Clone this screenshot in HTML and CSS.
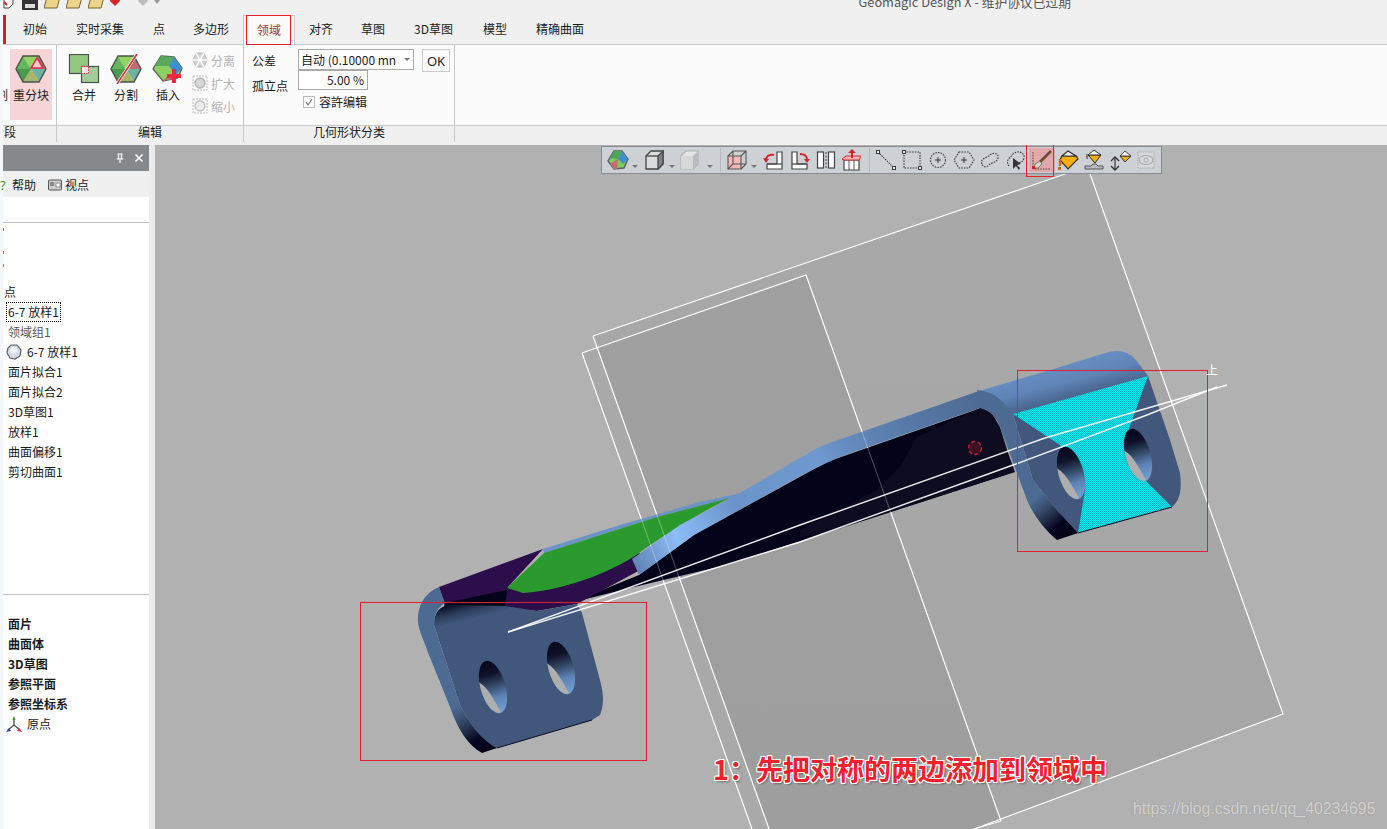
FILE: index.html
```html
<!DOCTYPE html>
<html lang="zh">
<head>
<meta charset="utf-8">
<title>Geomagic Design X</title>
<link rel="stylesheet" href="styles.css">
</head>
<body>
<svg class="defs" width="0" height="0">
  <defs>
    <symbol id="hex" viewBox="0 0 32 28">
      <polygon points="16,14 8,1 1,14" fill="#63b75f"/>
      <polygon points="16,14 8,1 24,1" fill="#93d35f"/>
      <polygon points="16,14 24,1 31,14" fill="#c46b6b"/>
      <polygon points="16,14 31,14 24,27" fill="#6bb3a0"/>
      <polygon points="16,14 24,27 8,27" fill="#a8b66c"/>
      <polygon points="16,14 8,27 1,14" fill="#479a4e"/>
      <polygon points="8,1 24,1 31,14 24,27 8,27 1,14" fill="none" stroke="#47534a" stroke-width="1.4"/>
    </symbol>
    <linearGradient id="gBand" gradientUnits="userSpaceOnUse" x1="632" y1="560" x2="980" y2="400">
      <stop offset="0" stop-color="#5f83b5"/><stop offset=".13" stop-color="#8cbdf8"/><stop offset=".3" stop-color="#6b94ca"/><stop offset=".55" stop-color="#6f98cf"/><stop offset=".72" stop-color="#5c80b0"/><stop offset="1" stop-color="#4d6a93"/>
    </linearGradient>
    <linearGradient id="gTop" gradientUnits="userSpaceOnUse" x1="1070" y1="358" x2="1080" y2="396">
      <stop offset="0" stop-color="#6a90c3"/><stop offset=".55" stop-color="#5f85b8"/><stop offset="1" stop-color="#47648c"/>
    </linearGradient>
    <linearGradient id="gFaceL" gradientUnits="userSpaceOnUse" x1="452" y1="603" x2="457" y2="623">
      <stop offset="0" stop-color="#03031a"/><stop offset=".5" stop-color="#2a3a58"/><stop offset="1" stop-color="#41587c"/>
    </linearGradient>
    <linearGradient id="gRimL" gradientUnits="userSpaceOnUse" x1="453" y1="708" x2="480" y2="750">
      <stop offset="0" stop-color="#4d6a93"/><stop offset=".35" stop-color="#334766"/><stop offset=".8" stop-color="#050520"/><stop offset="1" stop-color="#03031a"/>
    </linearGradient>
    <linearGradient id="gRimR" gradientUnits="userSpaceOnUse" x1="1030" y1="503" x2="1058" y2="537">
      <stop offset="0" stop-color="#4d6a93"/><stop offset=".35" stop-color="#334766"/><stop offset=".8" stop-color="#050520"/><stop offset="1" stop-color="#03031a"/>
    </linearGradient>
    <linearGradient id="gHole" x1="0" y1="0" x2="0" y2="1">
      <stop offset="0" stop-color="#06061c"/><stop offset=".25" stop-color="#10122a"/><stop offset=".5" stop-color="#38506f"/><stop offset=".7" stop-color="#5d82b4"/><stop offset="1" stop-color="#74a0d6"/>
    </linearGradient>
    <linearGradient id="gPlane" x1="0" y1="0" x2="0" y2="1">
      <stop offset="0" stop-color="#a8a8a8"/><stop offset="1" stop-color="#a6a6a6"/>
    </linearGradient>
    <pattern id="dither" width="2" height="2" patternUnits="userSpaceOnUse">
      <rect width="2" height="2" fill="#0fb4c4"/>
      <rect width="1" height="1" fill="#00f0f0"/>
      <rect x="1" y="1" width="1" height="1" fill="#00e4e8"/>
    </pattern>
    <g id="hole">
      <ellipse rx="12.5" ry="27" fill="url(#gHole)"/>
      <path d="M-12,-8 A12.5,27 0 0 0 1,26.5 C-3,14 -4,0 -12,-8Z" fill="#aeaeae"/>
    </g>
  </defs>
</svg>
<div class="app">
  <div class="titlebar">
    <svg class="qa-icon qa-doc" viewBox="0 0 14 14"><path d="M1,-6H10V4L6,8H1Z" fill="#fff" stroke="#444"/><path d="M1,2L4,5" stroke="#d22" stroke-width="2"/></svg>
    <svg class="qa-icon qa-save" viewBox="0 0 16 14"><path d="M0,-6H16V10H0Z" fill="#333"/><rect x="3" y="4" width="10" height="4" fill="#ddd"/></svg>
    <svg class="qa-icon qa-folder" viewBox="0 0 16 14"><path d="M3,-3H16L13,8H0Z" fill="#ecd48a" stroke="#77622a"/></svg>
    <svg class="qa-icon qa-folder" viewBox="0 0 16 14"><path d="M3,-3H16L13,8H0Z" fill="#ecd48a" stroke="#77622a"/></svg>
    <svg class="qa-icon qa-folder" viewBox="0 0 16 14"><path d="M3,-3H16L13,8H0Z" fill="#ecd48a" stroke="#77622a"/></svg>
    <svg class="qa-icon qa-gem" viewBox="0 0 12 14"><path d="M2,-2H10L11,1L6,6L1,1Z" fill="#d8232a"/></svg>
    <svg class="qa-icon qa-gem2" viewBox="0 0 12 14"><path d="M2,-2H10L11,1L6,6L1,1Z" fill="#bdbdbd"/></svg>
    <svg class="qa-icon qa-caret" viewBox="0 0 8 14"><path d="M1,0H7L4,4Z" fill="#999"/></svg>
    <span class="title-text">Geomagic Design X - 维护协议已过期</span>
  </div>
  <nav class="tabs">
    <i class="tab-mark"></i>
    <span class="tab">初始</span>
    <span class="tab tab-gap">实时采集</span>
    <span class="tab tab-gap">点</span>
    <span class="tab">多边形</span>
    <span class="tab tab-active"><span class="tab-label-red">领域</span></span>
    <span class="tab">对齐</span>
    <span class="tab">草图</span>
    <span class="tab tab-gap">3D草图</span>
    <span class="tab tab-gap-2">模型</span>
    <span class="tab tab-gap">精确曲面</span>
  </nav>
  <section class="ribbon">
    <div class="group group-seg">
      <div class="group-body body-end">
        <span class="clipped-label">分割</span>
        <div class="rb-btn rb-selected">
          <svg class="rb-icon" viewBox="0 0 32 30">
            <use href="#hex" x="0" y="1" width="32" height="28"/>
            <polygon points="22,4 28,14 16,14" fill="#f6c9cf" stroke="#d8324a" stroke-width="1.5"/>
          </svg>
          <span>重分块</span>
        </div>
      </div>
      <div class="group-label label-end"><span>分段</span></div>
    </div>
    <div class="group group-edit">
      <div class="group-body">
        <div class="rb-btn">
          <svg class="rb-icon" viewBox="0 0 32 30">
            <rect x="1.5" y="0.5" width="19" height="19" fill="#95c87f" stroke="#47524a" stroke-width="1.2"/>
            <rect x="13.5" y="12.5" width="17" height="16" fill="#a3cc9a" stroke="#47524a" stroke-width="1.2"/>
            <rect x="13.5" y="12.5" width="7" height="7" fill="#fbe3e3" stroke="#d8324a" stroke-dasharray="1.5 1"/>
          </svg>
          <span>合并</span>
        </div>
        <div class="rb-btn">
          <svg class="rb-icon" viewBox="0 0 32 30">
            <use href="#hex" x="0" y="1" width="32" height="28"/>
            <path d="M27,0L7,30" stroke="#fff" stroke-width="3"/>
            <path d="M27,0L7,30" stroke="#e02a3a" stroke-width="1.6"/>
          </svg>
          <span>分割</span>
        </div>
        <div class="rb-btn">
          <svg class="rb-icon" viewBox="0 0 32 30">
            <polygon points="9,2 22,3 30,14 26,24 11,27 1,15" fill="#8ccf62" stroke="#57625a" stroke-width="1.3"/>
            <polygon points="9,2 22,3 17,12 3,12" fill="#5aa95a"/>
            <polygon points="22,3 30,14 24,21 17,12" fill="#3d8fce"/>
            <polygon points="11,27 26,24 17,20" fill="#c46b6b"/>
            <path d="M22,15V29M15,22H29" stroke="#ea2a3c" stroke-width="4"/>
          </svg>
          <span>插入</span>
        </div>
        <div class="mini-col">
          <div class="mini-btn">
            <svg class="mini-icon" viewBox="0 0 16 16"><polygon points="4,1 12,1 15,8 12,15 4,15 1,8" fill="#cfcfcf" stroke="#bdbdbd"/><path d="M1,8H15M4,1L12,15M12,1L4,15" stroke="#fbfbfb" stroke-width="1.6"/></svg>
            <span>分离</span>
          </div>
          <div class="mini-btn">
            <svg class="mini-icon" viewBox="0 0 16 16"><rect x="1" y="1" width="14" height="14" fill="none" stroke="#bbb" stroke-dasharray="2 1"/><circle cx="8" cy="8" r="5" fill="#d6d6d6" stroke="#b5b5b5" stroke-width="1.4"/></svg>
            <span>扩大</span>
          </div>
          <div class="mini-btn">
            <svg class="mini-icon" viewBox="0 0 16 16"><rect x="1" y="1" width="14" height="14" fill="none" stroke="#bbb" stroke-dasharray="2 1"/><circle cx="8" cy="8" r="5" fill="#ececec" stroke="#c0c0c0" stroke-width="1.4"/></svg>
            <span>缩小</span>
          </div>
        </div>
      </div>
      <div class="group-label"><span>编辑</span></div>
    </div>
    <div class="group group-geo">
      <div class="group-body geo-form">
        <span class="geo-name">公差</span>
        <div class="geo-combo"><span>自动 (0.10000 mn</span><i class="combo-caret"></i></div>
        <button class="geo-ok" type="button">OK</button>
        <span class="geo-name geo-name-low">孤立点</span>
        <div class="geo-input">5.00 %</div>
        <span></span>
        <span></span>
        <label class="geo-check"><svg class="check-box" viewBox="0 0 12 12"><rect x=".5" y=".5" width="11" height="11" fill="#fff" stroke="#bbb"/><path d="M3,6L5,9L9,3" fill="none" stroke="#777" stroke-width="1.2"/></svg><span>容許编辑</span></label>
      </div>
      <div class="group-label"><span>几何形状分类</span></div>
    </div>
    <div class="group group-rest">
      <div class="group-body"></div>
      <div class="group-label"></div>
    </div>
  </section>
  <div class="band"></div>
  <main class="main">
    <aside class="panel">
      <header class="panel-head">
        <svg class="head-icon" viewBox="0 0 10 10"><path d="M2.5,1H7.5M3.5,1V6H6.5V1M1.5,6H8.5M5,6V10" fill="none" stroke="#fff" stroke-width="1.2"/></svg>
        <svg class="head-icon" viewBox="0 0 10 10"><path d="M1.5,1.5L8.5,8.5M8.5,1.5L1.5,8.5" stroke="#fff" stroke-width="1.6"/></svg>
      </header>
      <div class="panel-tools">
        <span class="help-mark">?</span><span class="tool-text">帮助</span>
        <svg class="view-icon" viewBox="0 0 14 12"><rect x=".5" y="1" width="13" height="10" rx="1" fill="#cfcfcf" stroke="#555"/><rect x="2" y="3" width="4" height="4" fill="#888"/><rect x="8" y="4" width="4" height="4" fill="#fff" stroke="#555" stroke-width=".6"/></svg>
        <span class="tool-text">视点</span>
      </div>
      <div class="panel-search"></div>
      <div class="panel-list">
        <div class="ticks"><i></i><i class="tick-b"></i><i class="tick-c"></i></div>
        <div class="row row-cut">点</div>
        <div class="row"><span class="focus">6-7 放样1</span></div>
        <div class="row row-muted">领域组1</div>
        <div class="row row-icon">
          <svg class="row-svg" viewBox="0 0 16 16"><polygon points="5,1 11,1 15,6 14,12 9,15 4,14 1,9 2,4" fill="#d3dbe2" stroke="#596068" stroke-width="1.2"/><polygon points="5,3 10,3 12,7 8,10 4,8" fill="#eef2f5"/></svg>
          <span>6-7 放样1</span>
        </div>
        <div class="row">面片拟合1</div>
        <div class="row">面片拟合2</div>
        <div class="row">3D草图1</div>
        <div class="row">放样1</div>
        <div class="row">曲面偏移1</div>
        <div class="row">剪切曲面1</div>
      </div>
      <div class="panel-list2">
        <div class="row row-bold">面片</div>
        <div class="row row-bold">曲面体</div>
        <div class="row row-bold">3D草图</div>
        <div class="row row-bold">参照平面</div>
        <div class="row row-bold">参照坐标系</div>
        <div class="row row-icon">
          <svg class="row-svg" viewBox="0 0 16 16"><path d="M8,9V2" stroke="#555" stroke-width="1.4"/><path d="M8,9L2,14M8,9L14,14" stroke="#555" stroke-width="1.4"/><path d="M6.5,4L8,0L9.5,4Z" fill="#3c9a1e"/><path d="M0,16L3,12L5,15Z" fill="#2a4fb0"/><path d="M16,16L13,12L11,15Z" fill="#d8324a"/></svg>
          <span>原点</span>
        </div>
      </div>
    </aside>
    <div class="gutter"></div>
    <div class="viewport">
      <svg class="scene" viewBox="155 145 1232 684" width="1232" height="684">
        <!-- datum planes -->
        <polygon points="593,336 1068,173 1090,174 1283,714 974,829 769,829" fill="url(#gPlane)"/>
        <polygon points="582,353 806,275 1001,821 974,829 752,829" fill="#000" opacity=".045"/>
        <g class="plane-lines">
          <polyline points="593,336 1068,173"/>
          <polyline points="593,336 769,829"/>
          <polyline points="1090,174 1283,714 974,829"/>
          <polyline points="582,353 806,275 1001,821 974,829"/>
          <polyline points="582,353 752,829"/>
        </g>
        <!-- part: left top -->
        <polygon points="543,549 620,525 700,502 750,491 735,497 657,517 544,553" fill="#6c93c7"/>
        <polygon points="570,603 639,575 694,535 827,462 981,408 995,418 1015,472 891,512 726,565 630,588" fill="#03031a"/>
        <polygon points="917,437 980,408 990,410 1000,427 1014,472 893,511 800,538 800,530 877,490 900,467" fill="#0d0c20"/>
        <path d="M505,588 L640,553 L642,569 L577,604 L537,611 L505,608Z" fill="#2c0f4a"/>
        <path d="M507,588 L544,553 L657,517 L730,498 C700,512 665,535 643,550 C620,568 570,590 523,593Z" fill="#2a9a2e"/>
        <polygon points="439,587 543,549 507,588 505,592 445,606" fill="#2c0f4a"/>
        <polygon points="445,603 507,590 505,606 444,608" fill="#03031a"/>
        <path d="M632,559 L680,525 L735,496 L810,452 Q822,445 841,439 L979,391 L980,408 L850,453 Q827,462 800,476 L694,535 L639,575Z" fill="url(#gBand)"/>
        <!-- left tab -->
        <path d="M434,625 C434,612 440,606 450,605 L505,606 L537,611 L577,604 L582,613 L600,680 C604,695 604,705 600,715 L592,720 L497,748 C482,740 470,725 460,705Z" fill="url(#gFaceL)"/>
        <path d="M439,587 C425,593 417,605 418,622 C419,632 424,640 427,650 L450,707 C458,730 468,745 482,753 L497,748 C482,740 470,725 460,705 L434,625 C434,612 440,606 445,603Z" fill="url(#gRimL)"/>
        <path d="M497,748 L592,720" stroke="#0a0a20" fill="none"/>
        <use href="#hole" transform="translate(493,687) rotate(-16)"/>
        <use href="#hole" transform="translate(561,668) rotate(-16)"/>
        <!-- right tab -->
        <path d="M979,391 L1057,368 L1105,353 Q1125,347 1136,360 L1148,376 L1013,414 L1000,400Z" fill="url(#gTop)"/>
        <path d="M1013,414 L1148,376 L1170,440 L1180,473 C1182,490 1180,500 1172,507 L1078,533 L1057,510 L1033,480Z" fill="#41587c"/>
        <path d="M977,390 Q992,391 1003,402 L1013,414 L1033,480 L1057,510 L1078,533 L1057,540 C1045,530 1033,515 1027,500 L1017,473 L1000,427 Q995,412 980,408Z" fill="url(#gRimR)"/>
        <polygon points="1013,414 1148,376 1126,437 1147,482 1172,507 1078,533 1085,490 1060,445" fill="url(#dither)"/>
        <path d="M1078,533 L1172,507" stroke="#0a0a20" fill="none"/>
        <use href="#hole" transform="translate(1071,473) rotate(-16)"/>
        <use href="#hole" transform="translate(1138,455) rotate(-16)"/>
        <circle cx="975" cy="448" r="6.5" fill="#3a1224" stroke="#c4203c" stroke-width="1.3" stroke-dasharray="4 2.5"/>
        <!-- lines on top -->
        <g class="plane-lines plane-faint">
          <polyline points="593,336 769,829"/>
          <polyline points="582,353 752,829"/>
          <polyline points="806,275 1001,821"/>
          <polyline points="1090,174 1283,714"/>
        </g>
        <g class="long-lines">
          <polyline points="508,632 800,525 1045,438 1227,385"/>
          <polyline points="508,632 800,542 1013,465 1147,415 1217,387"/>
        </g>
        <!-- annotation boxes -->
        <g class="marks">
          <rect x="360.5" y="602.5" width="286" height="158"/>
          <rect x="1017.5" y="370.5" width="190" height="181"/>
        </g>
      </svg>
      <span class="axis-label">上</span>
      <div class="vtoolbar">
        <span class="tb-btn"><svg viewBox="0 0 22 22"><polygon points="7,2 15,2 21,10 17,19 7,20 1,12" fill="#7ccb5e" stroke="#5c6066" stroke-width="1.4"/><polygon points="7,2 15,2 11,10 3,9" fill="#4ea655"/><polygon points="15,2 21,10 16,15 11,10" fill="#3d8fce"/><polygon points="3,15 11,10 10,20 7,20" fill="#c46b6b"/></svg></span>
        <i class="tb-arrow"></i>
        <span class="tb-btn"><svg viewBox="0 0 22 22"><path d="M2,7L7,2H19V15L14,20H2Z" fill="#d9dbde" stroke="#444" stroke-width="1.3"/><path d="M14,20V7L19,2V15Z" fill="#7d8288" stroke="#444" stroke-width="1.3"/><path d="M2,7H14" stroke="#444" stroke-width="1.3"/></svg></span>
        <i class="tb-arrow tb-arrow-n"></i>
        <span class="tb-btn"><svg viewBox="0 0 22 22"><path d="M2,7L7,2H19V15L14,20H2Z" fill="#e6e6e6" stroke="#aeb0b2" stroke-width="1.2"/><path d="M14,20V7L19,2V15Z" fill="#b9bbbd"/><path d="M2,7H14V20H2Z" fill="#d8d8d8"/></svg></span>
        <i class="tb-arrow tb-arrow-w"></i>
        <i class="tb-sep"></i>
        <span class="tb-btn"><svg viewBox="0 0 22 22"><path d="M2,7H15V20H2Z" fill="#f3b8b8" stroke="#555" stroke-width="1.1"/><path d="M2,7L7,2H20V15L15,20M15,7L20,2M7,2V15H20M2,20L7,15" fill="none" stroke="#555" stroke-width="1.1"/></svg></span>
        <i class="tb-arrow"></i>
        <span class="tb-btn"><svg viewBox="0 0 22 22"><path d="M14,3H19V20H4V15H14Z" fill="#fff" stroke="#444" stroke-width="1.2"/><path d="M4,15H19" stroke="#444" stroke-width="1.2"/><path d="M3,11C3,7 7,5 11,6" fill="none" stroke="#d8232a" stroke-width="1.8"/><path d="M0,9L3,14L6,10Z" fill="#d8232a"/></svg></span>
        <span class="tb-btn"><svg viewBox="0 0 22 22"><path d="M3,3H8V15H18V20H3Z" fill="#fff" stroke="#444" stroke-width="1.2"/><path d="M3,15H18" stroke="#444" stroke-width="1.2"/><path d="M11,5C15,5 18,7 18,11" fill="none" stroke="#d8232a" stroke-width="1.8"/><path d="M15,10L18,14L21,10Z" fill="#d8232a"/></svg></span>
        <span class="tb-btn"><svg viewBox="0 0 22 22"><rect x="2.5" y="3" width="6" height="16" fill="#fff" stroke="#444" stroke-width="1.2"/><rect x="13.5" y="3" width="6" height="16" fill="#fff" stroke="#444" stroke-width="1.2"/><path d="M11,3V19" stroke="#444" stroke-dasharray="2 1.5"/></svg></span>
        <span class="tb-btn"><svg viewBox="0 0 22 22"><path d="M3,11H18V21H3Z" fill="#fff" stroke="#444" stroke-width="1.2"/><path d="M8,11V21M13,11V21" stroke="#444" stroke-width=".9"/><path d="M1,10L5,7H20L18,11H3Z" fill="#f4b8b8" stroke="#d8232a"/><path d="M11,9V3" stroke="#d8232a" stroke-width="2"/><path d="M7,4L11,0L15,4Z" fill="#d8232a"/></svg></span>
        <i class="tb-sep"></i>
        <span class="tb-btn"><svg viewBox="0 0 22 22"><path d="M3,3L19,19" stroke="#444" stroke-dasharray="1.5 1" stroke-width="1.2"/><rect x="1.5" y="1.5" width="3" height="3" fill="#fff" stroke="#333"/><rect x="17.5" y="17.5" width="3" height="3" fill="#fff" stroke="#333"/></svg></span>
        <span class="tb-btn"><svg viewBox="0 0 22 22"><rect x="3" y="3" width="16" height="16" fill="none" stroke="#333" stroke-dasharray="1.5 1.2" stroke-width="1.1"/><rect x="1.5" y="1.5" width="3" height="3" fill="#fff" stroke="#333"/><rect x="17.5" y="17.5" width="3" height="3" fill="#fff" stroke="#333"/></svg></span>
        <span class="tb-btn"><svg viewBox="0 0 22 22"><circle cx="11" cy="11" r="7.5" fill="none" stroke="#333" stroke-dasharray="1.5 1.2" stroke-width="1.1"/><path d="M8,11H14M11,8V14" stroke="#333"/></svg></span>
        <span class="tb-btn"><svg viewBox="0 0 22 22"><polygon points="6,3 16,3 21,11 16,19 6,19 1,11" fill="none" stroke="#333" stroke-dasharray="1.5 1.2" stroke-width="1.1"/><path d="M8,11H14M11,8V14" stroke="#333"/></svg></span>
        <span class="tb-btn"><svg viewBox="0 0 22 22"><path d="M3,15C1,9 8,9 11,6C14,3 20,4 19,9C18,14 13,13 10,16C7,19 4,18 3,15Z" fill="none" stroke="#333" stroke-dasharray="1.5 1.2" stroke-width="1.1"/></svg></span>
        <span class="tb-btn"><svg viewBox="0 0 22 22"><path d="M4,17C0,11 5,9 8,5C12,1 20,3 19,9C18,14 14,13 11,15" fill="none" stroke="#333" stroke-dasharray="1.5 1.2" stroke-width="1.1"/><path d="M8,9L8,20L11,17L14,21L15,19L12,16L16,15Z" fill="#333"/></svg></span>
        <span class="tb-btn tb-on"><svg viewBox="0 0 22 22"><path d="M2,3V20H19" fill="none" stroke="#444" stroke-dasharray="1.5 1.2"/><path d="M20,2L9,13" stroke="#6d4a30" stroke-width="2.6"/><path d="M4,15L9,12L11,15L7,19L3,19Z" fill="#d9d4c2" stroke="#555" stroke-width=".7"/><rect x="1" y="17" width="3" height="3" fill="#d8232a"/></svg></span>
        <span class="tb-btn"><svg viewBox="0 0 22 22"><path d="M3,11L11,20L21,10L19,7H5Z" fill="#f7ae0c" stroke="#333" stroke-width="1.2"/><path d="M5,7L11,2L19,7Z" fill="#f5f5f5" stroke="#333" stroke-width="1.2"/><path d="M3,10V17" stroke="#c96a10" stroke-width="2.4"/><rect x="1" y="18" width="3" height="3" fill="#c96a10"/></svg></span>
        <span class="tb-btn"><svg viewBox="0 0 22 22"><path d="M5,6H18L12,14Z" fill="#f7ae0c" stroke="#333"/><path d="M5,6L11,1L18,6Z" fill="#f5f5f5" stroke="#333"/><path d="M2,20V17H8L10,15H13L15,17H20V20Z" fill="#b8bcc0" stroke="#555"/><path d="M4,10V5" stroke="#a05d20" stroke-width="1.6"/></svg></span>
        <span class="tb-btn"><svg viewBox="0 0 22 22"><path d="M11,7L16,13L22,7Z" fill="#f7ae0c" stroke="#333"/><path d="M11,7L16,2L22,7Z" fill="#f5f5f5" stroke="#333" stroke-width=".9"/><path d="M6,9V21" stroke="#333" stroke-width="1.2"/><path d="M2,12L6,8L10,12M2,17L6,21L10,17" fill="none" stroke="#333" stroke-width="1.4"/></svg></span>
        <span class="tb-btn"><svg viewBox="0 0 22 22"><rect x="3" y="3" width="16" height="16" fill="#d6d8da" stroke="#aaa" stroke-dasharray="1.5 1"/><ellipse cx="11" cy="11" rx="7" ry="4.5" fill="none" stroke="#a8a8a8" stroke-width="1.2"/><circle cx="11" cy="11" r="2.2" fill="none" stroke="#a8a8a8"/></svg></span>
      </div>
      <i class="tool-mark"></i>
      <p class="annotation">1：先把对称的两边添加到领域中</p>
      <p class="watermark">https://blog.csdn.net/qq_40234695</p>
    </div>
  </main>
</div>
</body>
</html>
```

FILE: styles.css
```css
* { box-sizing: border-box; }
html, body { margin: 0; padding: 0; }
body {
  width: 1387px;
  height: 829px;
  overflow: hidden;
  background: #f4f8fc;
  font-family: "Noto Sans CJK SC", "Noto Sans", "Liberation Sans", sans-serif;
  font-size: 12px;
  color: #1a1a1a;
}
.defs { position: absolute; }
.app {
  width: 1387px;
  height: 829px;
  padding-left: 3px;
  display: flex;
  flex-direction: column;
}

/* title bar */
.titlebar {
  height: 14px;
  flex: none;
  overflow: hidden;
  display: flex;
  align-items: flex-start;
  background: #f0f0f0;
}
.qa-icon { flex: none; height: 14px; display: block; }
.qa-doc { width: 14px; margin-left: 0; }
.qa-save { width: 16px; margin-left: 5px; }
.qa-folder { width: 16px; margin-left: 6px; }
.qa-gem { width: 12px; margin-left: 5px; }
.qa-gem2 { width: 12px; margin-left: 16px; }
.qa-caret { width: 8px; margin-left: 4px; }
.title-text {
  margin-left: auto;
  margin-right: 316px;
  margin-top: -8px;
  font-size: 12.75px;
  line-height: 20px;
  color: #555;
  white-space: nowrap;
}

/* tabs */
.tabs {
  height: 31px;
  flex: none;
  display: flex;
  align-items: stretch;
  background: #f0f0f0;
  border-bottom: 1px solid #c8c8c8;
}
.tab-mark { width: 3px; flex: none; background: #c8262e; margin-top: 1px; margin-right: 3px; }
.tab {
  flex: none;
  padding: 0 14px;
  line-height: 30px;
  font-size: 12px;
  white-space: nowrap;
}
.tab-gap { margin-left: 1px; }
.tab-gap-2 { margin-left: 2px; }
.tab-active {
  position: relative;
  background: #fbfbfb;
  border: 1px solid #c8c8c8;
  border-bottom: 0;
  margin: 1px 0 -1px;
  padding: 0 13px;
  line-height: 28px;
  height: 31px;
}
.tab-label-red {
  color: #9b3a2a;
}
.tab-active::after {
  content: "";
  position: absolute;
  left: 2px;
  top: -1px;
  width: 43px;
  height: 28px;
  border: 1px solid #e8202e;
}

/* ribbon */
.ribbon {
  height: 97px;
  flex: none;
  display: flex;
  background: #fbfbfb;
}
.group {
  flex: none;
  display: flex;
  flex-direction: column;
  border-right: 1px solid #c8c8c8;
}
.group-seg { width: 54px; }
.group-edit { width: 187px; }
.group-geo { width: 211px; }
.group-rest { flex: 1; border-right: 0; }
.group-body {
  height: 80px;
  flex: none;
  display: flex;
  overflow: hidden;
}
.body-end { justify-content: flex-end; padding-right: 4px; }
.group-edit .group-body { padding-left: 6px; }
.group-label {
  height: 17px;
  flex: none;
  display: flex;
  justify-content: center;
  overflow: hidden;
  background: #f0f0f0;
  border-top: 1px solid #c8c8c8;
  line-height: 12px;
  color: #222;
  white-space: nowrap;
}
.group-label span { flex: none; }
.label-end { justify-content: flex-end; padding-right: 40px; }
.clipped-label { flex: none; margin: 42px 2px 0 0; line-height: 16px; }
.rb-btn {
  flex: none;
  width: 42px;
  height: 71px;
  margin-top: 4px;
  padding-top: 5px;
  display: flex;
  flex-direction: column;
  align-items: center;
  gap: 3px;
  line-height: 16px;
  white-space: nowrap;
}
.rb-selected { background: #f5d5d7; }
.rb-icon { width: 32px; height: 30px; display: block; flex: none; }
.mini-col {
  flex: none;
  margin: 7px 0 0 3px;
  display: flex;
  flex-direction: column;
  gap: 7px;
}
.mini-btn {
  display: flex;
  align-items: center;
  gap: 3px;
  height: 16px;
  color: #b4b4b4;
}
.mini-icon { width: 16px; height: 16px; flex: none; }

.geo-form {
  display: grid;
  grid-template-columns: 46px 116px 36px;
  grid-template-rows: 21px 20px 23px;
  column-gap: 0;
  align-content: start;
  padding: 4px 0 0 8px;
}
.geo-name { line-height: 24px; white-space: nowrap; }
.geo-name-low { line-height: 32px; }
.geo-combo {
  display: flex;
  align-items: center;
  justify-content: space-between;
  padding: 0 3px 0 2px;
  background: #fff;
  border: 1px solid #aaa;
  white-space: nowrap;
  overflow: hidden;
}
.combo-caret {
  flex: none;
  border: 3px solid transparent;
  border-top: 3px solid #777;
  margin-top: 3px;
}
.geo-ok {
  width: 28px;
  height: 23px;
  margin-left: 8px;
  padding: 0;
  background: #fbfbfb;
  border: 1px solid #ccc;
  font: 13px "Noto Sans", "Liberation Sans", sans-serif;
  color: #222;
}
.geo-input {
  width: 70px;
  height: 20px;
  padding-right: 3px;
  margin-top: 0;
  background: #fff;
  border: 1px solid #aaa;
  text-align: right;
  line-height: 18px;
  font-size: 12px;
}
.geo-check {
  grid-column: 2 / 4;
  display: flex;
  align-items: center;
  gap: 4px;
  padding-left: 5px;
  height: 23px;
  white-space: nowrap;
}
.check-box { width: 12px; height: 12px; flex: none; }

.band { height: 3px; flex: none; background: #f0f0f0; }

/* main */
.main { flex: 1; min-height: 0; display: flex; }
.panel {
  width: 146px;
  flex: none;
  display: flex;
  flex-direction: column;
  background: #fff;
}
.panel-head {
  height: 26px;
  flex: none;
  display: flex;
  align-items: center;
  justify-content: flex-end;
  gap: 9px;
  padding-right: 5px;
  background: #85898c;
}
.head-icon { width: 10px; height: 10px; flex: none; }
.panel-tools {
  height: 26px;
  flex: none;
  display: flex;
  align-items: center;
  padding-top: 2px;
  background: #f0f0f0;
}
.help-mark { color: #3c9a1e; width: 12px; font-size: 13px; font-family: "Noto Sans", sans-serif; margin-left: -3px; }
.tool-text { line-height: 16px; }
.view-icon { width: 14px; height: 12px; margin: 0 3px 0 12px; flex: none; }
.panel-search { height: 26px; flex: none; border-bottom: 1px solid #c0c0c0; }
.panel-list {
  height: 372px;
  flex: none;
  border-bottom: 1px solid #c0c0c0;
}
.ticks {
  height: 59px;
  display: flex;
  flex-direction: column;
}
.ticks i { width: 1px; height: 3px; background: #4a8fd0; margin-top: 5px; }
.ticks .tick-b { margin-top: 20px; }
.ticks .tick-c { margin-top: 10px; }
.row {
  height: 20px;
  display: flex;
  align-items: center;
  padding-left: 5px;
  line-height: 16px;
  white-space: nowrap;
}
.row-cut { padding-left: 1px; }
.row-muted { color: #555; }
.focus { outline: 1px dotted #000; outline-offset: 1px; }
.row-icon { padding-left: 3px; gap: 5px; }
.row-svg { width: 16px; height: 16px; flex: none; }
.panel-list2 { padding-top: 19px; }
.row-bold { font-weight: 700; }
.gutter { width: 6px; flex: none; background: #ececec; }

/* viewport */
.viewport {
  position: relative;
  flex: 1;
  min-width: 0;
  overflow: hidden;
  background: #b1b1b1;
}
.scene { position: absolute; left: 0; top: 0; display: block; }
.plane-lines polyline { fill: none; stroke: #fff; stroke-width: 1.1; }
.plane-faint polyline { opacity: .28; }
.long-lines polyline { fill: none; stroke: #fff; stroke-width: 1.4; opacity: .92; }
.marks rect { fill: none; stroke: #e0202c; stroke-width: 1; }
.axis-label {
  position: absolute;
  left: 1051px;
  top: 217px;
  color: #fff;
  font-size: 12px;
  line-height: 16px;
}
.vtoolbar {
  position: absolute;
  left: 446px;
  top: 1px;
  width: 561px;
  height: 28px;
  padding-left: 3px;
  display: flex;
  align-items: center;
  background: #cdd0d4;
  border: 1px solid #878a90;
}
.tb-btn {
  width: 26px;
  height: 24px;
  flex: none;
  display: flex;
  align-items: center;
  justify-content: center;
}
.tb-btn svg { width: 22px; height: 22px; display: block; }
.tb-on { background: #e0a8a8; }
.tb-arrow {
  width: 11px;
  height: 24px;
  flex: none;
  position: relative;
}
.tb-arrow::after {
  content: "";
  position: absolute;
  left: 1px;
  bottom: 1px;
  border: 3px solid transparent;
  border-top: 3px solid #777;
}
.tb-arrow-n { width: 9px; }
.tb-arrow-w { width: 13px; }
.tb-arrow-w::after { left: 4px; }
.tb-sep { width: 1px; height: 24px; flex: none; background: #b4b7bb; margin: 0 3px 0 4px; }
.tool-mark {
  position: absolute;
  left: 871px;
  top: -5px;
  width: 28px;
  height: 37px;
  border: 1px solid #e8202e;
}
.annotation {
  position: absolute;
  left: 558px;
  top: 604px;
  margin: 0;
  font-size: 27px;
  line-height: 40px;
  font-weight: 700;
  color: #f0202c;
  white-space: nowrap;
  text-shadow: 1px 0 0 #fff, -1px 0 0 #fff, 0 1px 0 #fff, 0 -1px 0 #fff, 1px 1px 0 #fff, -1px -1px 0 #fff, 1px -1px 0 #fff, -1px 1px 0 #fff, 2px 2px 2px rgba(0,0,0,.35);
}
.watermark {
  position: absolute;
  left: 978px;
  top: 654px;
  margin: 0;
  font-family: "Liberation Sans", sans-serif;
  font-size: 15.8px;
  line-height: 20px;
  color: rgba(255,255,255,.62);
  white-space: nowrap;
  text-shadow: 0 0 1px rgba(90,90,90,.5);
}
```
